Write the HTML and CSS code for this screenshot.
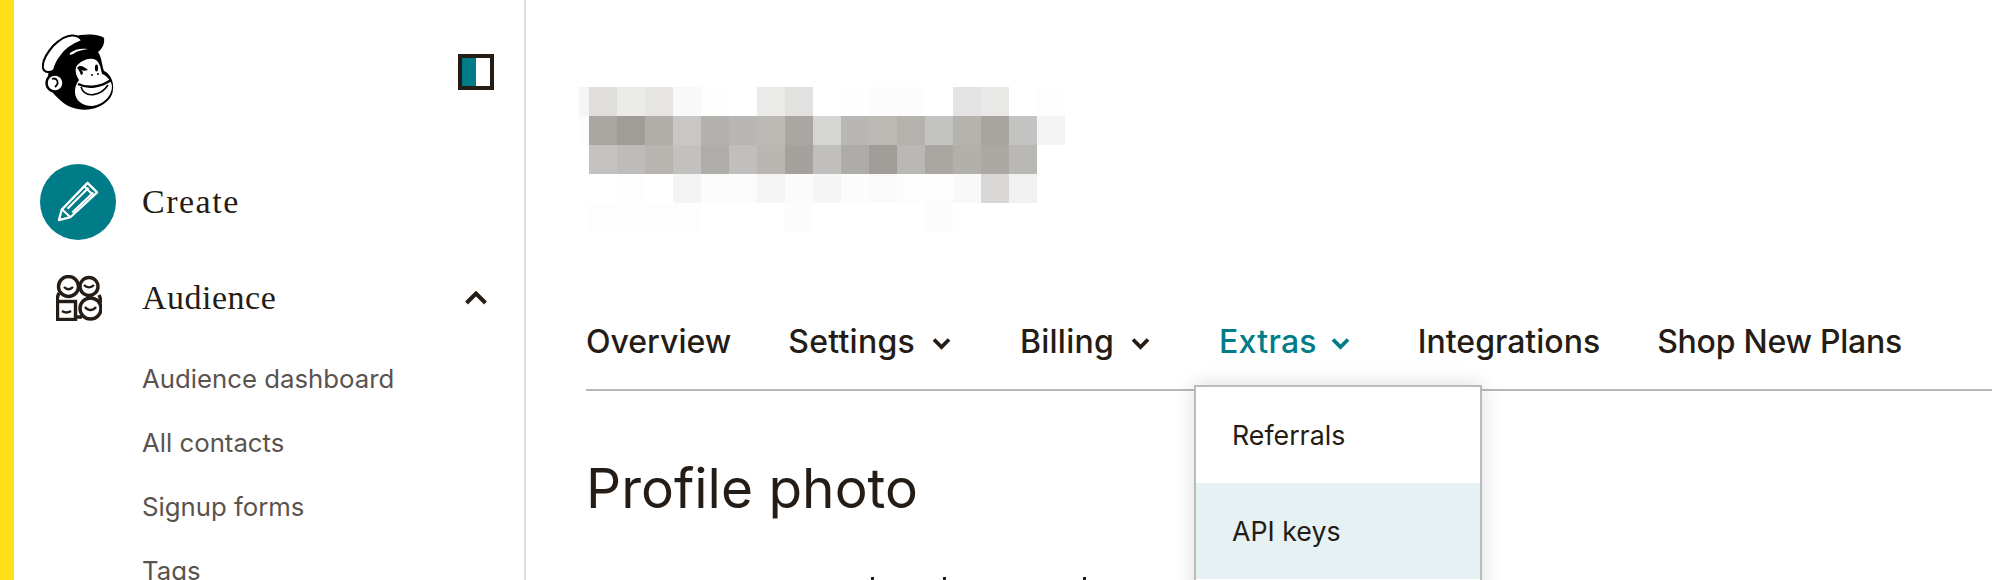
FILE: index.html
```html
<!DOCTYPE html>
<html lang="en">
<head>
<meta charset="utf-8">
<title>Account</title>
<link rel="stylesheet" href="styles.css">
</head>
<body>
<div class="app">
  <aside class="sidebar">
    <div class="brand">
      <svg class="logo" viewBox="0 0 72 76" aria-hidden="true">
        <path d="M30 3C42-1 58 0 62 4C63 10 60 15 56 18C60 24 60 32 62 37C67 39 72 46 71 55C71 63 64 70 56 73C44 78 28 76 18 66C14 62 9 58 7 52C5 44 6 36 10 30C14 20 22 10 30 3Z" fill="#000"/>
        <path d="M1 34C0 28 5 19 11 12C17 6 25 1 31 1.500C36 2 39 4 40 7C32 10 24 15 19 22C15 27 13 32 12 36C8 39 2 39 1 34Z" fill="#fff" stroke="#000" stroke-width="2"/>
        <circle cx="13" cy="49" r="8.500" fill="#fff" stroke="#000" stroke-width="2.500"/>
        <path d="M10 45C15 43 18 49 13 53" fill="none" stroke="#000" stroke-width="1.800"/>
        <path d="M28 19C33 15 39 14 46 15C40 16 35 17 31 20C29 21 27 21 28 19Z" fill="#fff"/>
        <path d="M34 33C39 26 48 23 54 26C58 29 59 35 60 40C64 41 69 46 70 52C70 63 60 71 50 72C40 72 33 66 33 58C33 52 35 49 37 46C34 42 33 37 34 33Z" fill="#fff"/>
        <path d="M35 34C38 30 42 33 46 36C43 37 41 37 39 36C42 38 41 41 39 41C38 38 37 36 35 34Z" fill="#000"/>
        <ellipse cx="54.500" cy="34" rx="1.600" ry="3.400" fill="#000"/>
        <circle cx="50" cy="41" r="1" fill="#000"/><circle cx="56" cy="40" r="1" fill="#000"/>
        <path d="M36 50C46 55 59 53 69 46" fill="none" stroke="#000" stroke-width="2.400"/>
        <path d="M39 53C43 65 59 62 66 51" fill="none" stroke="#000" stroke-width="1.600"/>
      </svg>
      <div class="toggle"><span class="toggle-fill"></span></div>
    </div>
    <nav class="primary">
      <a class="primary-item">
        <span class="create-badge">
          <svg viewBox="0 0 44 44" class="pencil" aria-hidden="true">
            <path d="M2 42L5 31L32 3L42 13L14 39Z" fill="none" stroke="#fff" stroke-width="2.400" stroke-linejoin="round"/>
            <path d="M5.500 31L14 39M11 30L33 8M16 34L38 13M28 6L38 16" fill="none" stroke="#fff" stroke-width="2.200"/>
          </svg>
        </span>
        <span class="primary-label label-create">Create</span>
      </a>
      <a class="primary-item audience">
        <span class="audience-icon">
          <svg viewBox="0 0 46 46" aria-hidden="true">
            <g fill="none" stroke="#241c15" stroke-width="3.400">
              <path d="M3 18C1 22 1 26 3 28M43 20C45 24 45 27 43 29M20 42H26"/>
              <circle cx="12.500" cy="11.500" r="10" fill="#fff"/>
              <circle cx="33" cy="11.500" r="9" fill="#fff"/>
              <circle cx="34.500" cy="33.500" r="10.500" fill="#fff"/>
              <rect x="1.500" y="26.500" width="18" height="18" fill="#fff"/>
              <path d="M8 12C11 15 14 15 17 12M28 10C31 13 35 13 38 10M29 32C32 36 37 36 40 32M6 36C9 38 12 38 15 36" stroke-width="2.400"/>
            </g>
          </svg>
        </span>
        <span class="primary-label label-audience">Audience</span>
        <svg class="caret-up" viewBox="0 0 22 14" aria-hidden="true"><path d="M1.500 12L11 2.500L20.500 12" fill="none" stroke="#241c15" stroke-width="4"/></svg>
      </a>
    </nav>
    <ul class="subnav">
      <li>Audience dashboard</li>
      <li>All contacts</li>
      <li>Signup forms</li>
      <li>Tags</li>
    </ul>
  </aside>
  <main class="main">
    <svg class="pixels" viewBox="0 0 486 145" aria-hidden="true">
      <g>
        <rect x="0" y="0" width="10" height="29" fill="#f5f5f5"/>
        <rect x="10" y="0" width="28" height="29" fill="#dfdedc"/><rect x="38" y="0" width="28" height="29" fill="#ebebe9"/><rect x="66" y="0" width="28" height="29" fill="#e6e5e3"/><rect x="94" y="0" width="28" height="29" fill="#f9f9f9"/><rect x="122" y="0" width="28" height="29" fill="#fdfdfd"/><rect x="178" y="0" width="28" height="29" fill="#eaeae8"/><rect x="206" y="0" width="28" height="29" fill="#e2e1df"/><rect x="262" y="0" width="28" height="29" fill="#fdfefd"/><rect x="290" y="0" width="56" height="29" fill="#fcfcfc"/><rect x="374" y="0" width="28" height="29" fill="#e3e3e3"/><rect x="402" y="0" width="28" height="29" fill="#e8e8e6"/><rect x="458" y="0" width="28" height="29" fill="#fdfdfd"/>
      </g>
      <g>
        <rect x="0" y="29" width="10" height="29" fill="#fbfcfb"/>
        <rect x="10" y="29" width="28" height="29" fill="#a9a6a2"/><rect x="38" y="29" width="28" height="29" fill="#a09d98"/><rect x="66" y="29" width="28" height="29" fill="#b1aeaa"/><rect x="94" y="29" width="28" height="29" fill="#c8c7c5"/><rect x="122" y="29" width="28" height="29" fill="#b2b1ad"/><rect x="150" y="29" width="28" height="29" fill="#b7b6b4"/><rect x="178" y="29" width="28" height="29" fill="#bcb9b5"/><rect x="206" y="29" width="28" height="29" fill="#aaa7a3"/><rect x="234" y="29" width="28" height="29" fill="#d5d5d3"/><rect x="262" y="29" width="28" height="29" fill="#b8b7b5"/><rect x="290" y="29" width="28" height="29" fill="#bcb8b4"/><rect x="318" y="29" width="28" height="29" fill="#b5b2ae"/><rect x="346" y="29" width="28" height="29" fill="#c3c3c1"/><rect x="374" y="29" width="28" height="29" fill="#b6b2ae"/><rect x="402" y="29" width="28" height="29" fill="#a8a4a0"/><rect x="430" y="29" width="28" height="29" fill="#c3c3c1"/><rect x="458" y="29" width="28" height="29" fill="#f4f4f4"/>
      </g>
      <g>
        <rect x="10" y="58" width="28" height="29" fill="#c3c2c0"/><rect x="38" y="58" width="28" height="29" fill="#bdbcba"/><rect x="66" y="58" width="28" height="29" fill="#b8b5b1"/><rect x="94" y="58" width="28" height="29" fill="#c2c1bf"/><rect x="122" y="58" width="28" height="29" fill="#aeada9"/><rect x="150" y="58" width="28" height="29" fill="#c0bfbd"/><rect x="178" y="58" width="28" height="29" fill="#bab6b2"/><rect x="206" y="58" width="28" height="29" fill="#a5a29e"/><rect x="234" y="58" width="28" height="29" fill="#c0bfbd"/><rect x="262" y="58" width="28" height="29" fill="#adaca8"/><rect x="290" y="58" width="28" height="29" fill="#a19e9a"/><rect x="318" y="58" width="28" height="29" fill="#b9b8b6"/><rect x="346" y="58" width="28" height="29" fill="#aaa7a3"/><rect x="374" y="58" width="28" height="29" fill="#b1b0ab"/><rect x="402" y="58" width="28" height="29" fill="#aca8a4"/><rect x="430" y="58" width="28" height="29" fill="#b9b8b4"/>
      </g>
      <g>
        <rect x="38" y="87" width="28" height="29" fill="#fdfdfd"/><rect x="94" y="87" width="28" height="29" fill="#f4f4f4"/><rect x="122" y="87" width="56" height="29" fill="#fcfcfc"/><rect x="178" y="87" width="28" height="29" fill="#f5f5f5"/><rect x="206" y="87" width="28" height="29" fill="#fbfbfb"/><rect x="234" y="87" width="28" height="29" fill="#f5f5f5"/><rect x="262" y="87" width="28" height="29" fill="#fbfcfb"/><rect x="290" y="87" width="28" height="29" fill="#fafafa"/><rect x="318" y="87" width="56" height="29" fill="#fcfdfc"/><rect x="374" y="87" width="28" height="29" fill="#f9f9f9"/><rect x="402" y="87" width="28" height="29" fill="#d8d7d5"/><rect x="430" y="87" width="28" height="29" fill="#f1f1f1"/>
      </g>
      <g>
        <rect x="10" y="116" width="112" height="29" fill="#fdfdfd"/><rect x="206" y="116" width="28" height="29" fill="#fcfcfc"/><rect x="346" y="116" width="28" height="29" fill="#fcfcfc"/>
      </g>
    </svg>
    <div class="tabs-wrap">
      <nav class="tabs">
        <a class="tab">Overview</a>
        <a class="tab tab-menu">Settings<svg class="chev" viewBox="0 0 19 13" aria-hidden="true"><path d="M2 2.500L9.500 10L17 2.500" fill="none" stroke="currentColor" stroke-width="3.800"/></svg></a>
        <a class="tab tab-menu">Billing<svg class="chev" viewBox="0 0 19 13" aria-hidden="true"><path d="M2 2.500L9.500 10L17 2.500" fill="none" stroke="currentColor" stroke-width="3.800"/></svg></a>
        <a class="tab tab-menu tab-active">Extras<svg class="chev" viewBox="0 0 19 13" aria-hidden="true"><path d="M2 2.500L9.500 10L17 2.500" fill="none" stroke="currentColor" stroke-width="3.800"/></svg></a>
        <a class="tab">Integrations</a>
        <a class="tab tab-tight">Shop New Plans</a>
      </nav>
      <div class="dropdown">
        <div class="drop-item">Referrals</div>
        <div class="drop-item drop-selected">API keys</div>
      </div>
    </div>
    <h1 class="heading">Profile photo</h1>
    <div class="clipped-line" aria-hidden="true"><span class="tick tick-a"></span><span class="tick tick-b"></span><span class="tick tick-c"></span></div>
  </main>
</div>
</body>
</html>
```
FILE: styles.css
```css
* { box-sizing: border-box; }
html, body { margin: 0; height: 580px; overflow: hidden; background: #fff; }
body { font-family: Inter, "Liberation Sans", sans-serif; color: #241c15; }
.app { display: flex; height: 580px; overflow: hidden; border-left: 14px solid #ffe01b; }
.sidebar { width: 512px; flex: none; border-right: 2px solid #ddd; padding: 34px 30px 0 28px; }
.brand { display: flex; justify-content: space-between; align-items: flex-start; height: 130px; }
.logo { width: 72px; height: 76px; display: block; }
.toggle { width: 36px; height: 36px; border: 4px solid #241c15; margin-top: 20px; }
.toggle-fill { display: block; width: 50%; height: 100%; background: #007c89; }
.primary { display: flex; flex-direction: column; }
.primary-item { display: flex; align-items: center; height: 76px; }
.audience { margin-top: 20px; }
.create-badge { width: 76px; height: 76px; border-radius: 50%; background: #007c89; display: flex; align-items: center; justify-content: center; flex: none; margin-left: -2px; }
.pencil { width: 42px; height: 42px; margin-top: -2px; }
.audience-icon { width: 76px; flex: none; margin-left: -1px; margin-right: -1px; display: flex; justify-content: center; }
.audience-icon svg { width: 46px; height: 46px; display: block; }
.primary-label { font-family: "Liberation Serif", serif; font-size: 34px; margin-left: 26px; color: #241c15; }
.label-create { letter-spacing: 1.5px; }
.label-audience { letter-spacing: .5px; }
.caret-up { width: 22px; height: 14px; margin-left: auto; margin-right: 7px; }
.subnav { list-style: none; margin: 11px 0 0; padding: 0 0 0 100px; }
.subnav li { font-size: 25.75px; line-height: 64px; color: #5a534d; }
.main { flex: 1; min-width: 0; padding: 87px 0 0 60px; }
.pixels { display: block; width: 486px; height: 145px; margin-left: -7px; }
.tabs-wrap { position: relative; margin-top: 90px; }
.tabs { display: flex; gap: 57px; border-bottom: 2px solid #b8b8b8; height: 69px; }
.tab { font-size: 32px; font-weight: 520; display: flex; align-items: flex-start; line-height: 40px; color: #241c15; }
.tab-menu { letter-spacing: .25px; }
.tab-tight { letter-spacing: -.25px; }
.tab-active { color: #007c89; }
.chev { width: 19px; height: 13px; margin: 15px 12px 0 17px; }
.tab-active .chev { margin-left: 14px; margin-right: 11px; }
.dropdown { position: absolute; left: 608px; top: 63px; width: 288px; height: 230px; background: #fff; border: 2px solid #bbb; box-shadow: 0 0 20px rgba(0,0,0,.14); }
.drop-item { height: 96px; padding: 0 36px; font-size: 26.75px; display: flex; align-items: center; }
.drop-selected { background: #e5f1f3; }
.heading { font-size: 55px; font-weight: 400; margin: 65px 0 0; line-height: 64px; color: #241c15; }
.clipped-line { display: flex; margin-top: 57px; height: 3px; }
.tick { width: 3px; height: 3px; background: #241c15; }
.tick-a { margin-left: 285px; }
.tick-b { margin-left: 69px; }
.tick-c { margin-left: 137px; }
```
